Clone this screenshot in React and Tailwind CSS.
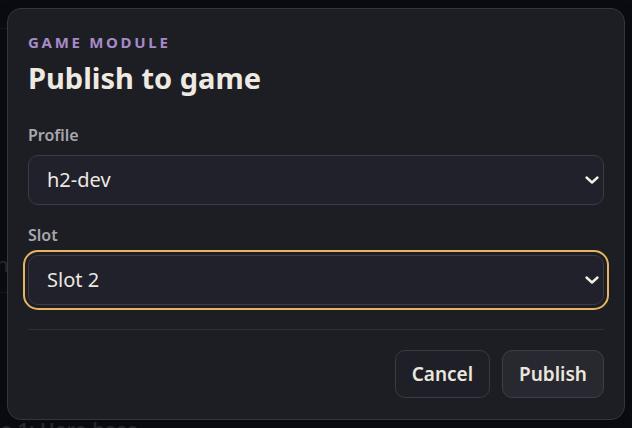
function Chevron() {
    return (
        <svg width="16" height="16" viewBox="0 0 16 16" fill="none" className="pointer-events-none">
            <path d="M2.5 5.5 L8 10.5 L13.5 5.5" stroke="#f2eee8" strokeWidth="2.4" strokeLinecap="round" strokeLinejoin="round" />
        </svg>
    )
}

function Field({ label, value, focused }) {
    return (
        <div className="flex flex-col">
            <label className="text-[16px] leading-5 font-semibold text-[#a7a7ae] mb-2.5">{label}</label>
            <div
                className={
                    focused
                        ? "flex items-center justify-between h-[50px] rounded-[10px] border border-[#3b3c46] bg-[#20212a] pl-[18px] pr-[3px] outline-2 outline-offset-[3px] outline-[#e5b562]"
                        : "flex items-center justify-between h-[50px] rounded-[10px] border border-[#3b3c46] bg-[#20212a] pl-[18px] pr-[3px]"
                }
            >
                <span className="text-[20px] text-[#ece8e1]">{value}</span>
                <Chevron />
            </div>
        </div>
    )
}

export default function App() {
    return (
        <div className="relative h-[428px] w-full overflow-hidden bg-[#0a0c12] font-['Noto_Sans',sans-serif]">

            {/* page behind the modal */}
            <div className="flex flex-col text-[#2b2d35] -ml-[60px] pt-[28px]">
                <div className="h-[1px] w-[200px] bg-[#161821]" />
                <div className="text-[22px] font-semibold mt-[12px]">Data</div>
                <div className="text-[20px] mt-[176px]">Section</div>
                <div className="h-[1px] w-[200px] bg-[#161821] mt-[12px]" />
                <div className="text-[20px] font-semibold mt-[122px] ml-[14px]">Phase 1: Hero base</div>
            </div>

            {/* modal */}
            <div className="absolute inset-0 flex items-center justify-center">
                <div className="w-[618px] h-[412px] rounded-[14px] border border-[#34353e] bg-[#1d1e23] px-5 pt-6 pb-5 flex flex-col shadow-2xl">
                    <div className="text-[15px] leading-[18px] font-bold tracking-[0.18em] text-[#a68bc8]">GAME MODULE</div>
                    <h2 className="text-[29px] leading-[34px] font-bold text-[#eee9e1] mt-2.5">Publish to game</h2>

                    <div className="mt-[30px] flex flex-col gap-5">
                        <Field label="Profile" value="h2-dev" />
                        <Field label="Slot" value="Slot 2" focused />
                    </div>

                    <div className="h-px bg-[#2f3038] mt-6" />

                    <div className="flex justify-end gap-3 mt-5">
                        <button className="h-12 px-[16px] rounded-[10px] border border-[#393a44] bg-[#1f2027] text-[19px] font-semibold text-[#ebe6de]">
                            Cancel
                        </button>
                        <button className="h-12 px-[16px] rounded-[10px] border border-[#3d3e48] bg-[#272830] text-[19px] font-semibold text-[#ebe6de]">
                            Publish
                        </button>
                    </div>
                </div>
            </div>
        </div>
    )
}
